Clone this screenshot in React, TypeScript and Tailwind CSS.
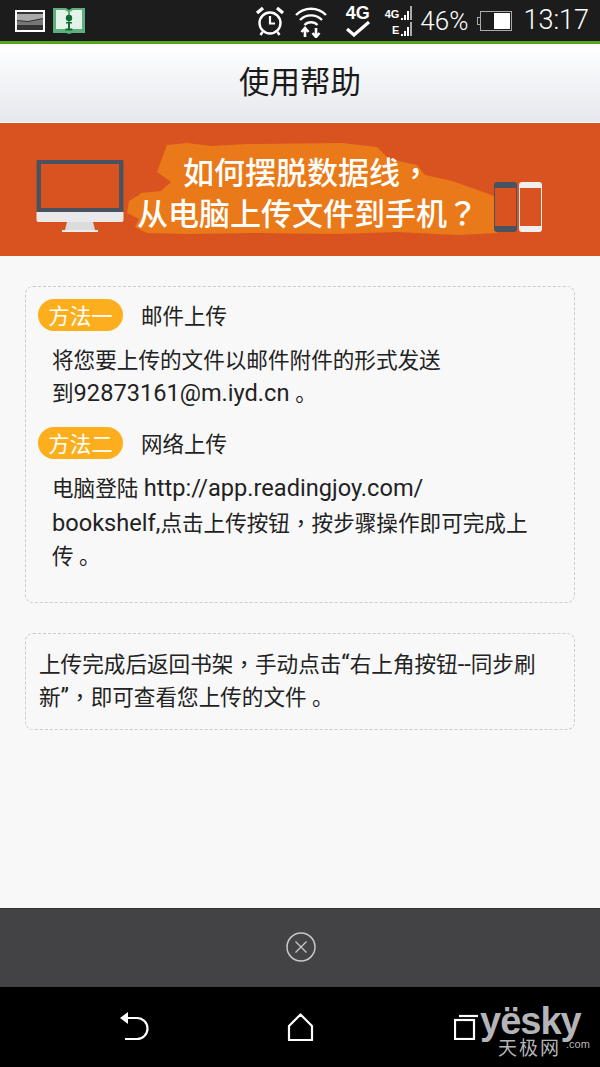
import React from 'react';

const font = { fontFamily: 'Roboto, "Noto Sans CJK SC", sans-serif' };

// latin runs are set a bit larger than the chinese ones in the reference
const L = ({ children }: { children: React.ReactNode }) => <span className="text-[23.6px] leading-[0]">{children}</span>;
// centered fullwidth punctuation
const P = ({ children }: { children: React.ReactNode }) => <span className="font-['Noto_Sans_CJK_TC']">{children}</span>;

const Signal = ({ label }: { label: string }) => (
  <div className="flex items-end h-[14px] gap-[1px]">
    <span className="text-[11px] leading-[11px] font-bold text-white font-['Liberation_Sans'] mr-[1px]">{label}</span>
    <span className="w-[2px] h-[2px] bg-white" />
    <span className="w-[2px] h-[5px] bg-white" />
    <span className="w-[2px] h-[9px] bg-white" />
    <span className="w-[2px] h-[14px] bg-[#aaaaaa]" />
  </div>
);

const StatusBar = () => (
  <div className="h-[41px] bg-[#1c1c1c] flex items-center pl-[14px] pr-[11px] text-white">
    <svg width="32" height="26" viewBox="0 0 32 26" className="mr-[6px]">
      <rect x="1" y="2" width="30" height="22" fill="#fff" />
      <rect x="3" y="4" width="26" height="18" fill="#333" />
      <path d="M3 6h26v4L14 13 3 12z" fill="#aaa" />
      <path d="M3 13l11 1 15-3v6H3z" fill="#777" />
    </svg>
    <svg width="34" height="28" viewBox="0 0 34 28">
      <path d="M1 1h13l3 2 3-2h13v25H20l-3 1-3-1H1z" fill="#5fae7d" />
      <path d="M4 3h9l3 2v18l-3-1H4zM30 3h-9l-3 2v18l3-1h9z" fill="#e3f3e8" />
      <circle cx="17" cy="11" r="3.200" fill="#0f6b35" />
      <path d="M14 15h6v1.600h-2v5h2.400v2h-7v-2H16v-5h-2z" fill="#0f6b35" />
    </svg>
    <div className="flex-1" />
    <svg width="32" height="32" viewBox="0 0 32 32" fill="none" stroke="#fff" className="mr-[8px]">
      <circle cx="16" cy="18" r="10.500" strokeWidth="2.400" />
      <path d="M16 11v7.500h5" strokeWidth="2.200" />
      <path d="M3 8l6-5M29 8l-6-5" strokeWidth="3.400" />
      <path d="M8.500 27l-2 3M23.500 27l2 3" strokeWidth="2.400" />
    </svg>
    <svg width="34" height="34" viewBox="0 0 34 34" fill="none" stroke="#fff" strokeWidth="2.400" className="mr-[18px]">
      <path d="M2 11a21 21 0 0 1 30 0" />
      <path d="M6 16a15.500 15.500 0 0 1 22 0" />
      <path d="M10.500 21a9 9 0 0 1 13 0" />
      <path d="M11 33v-7M7.500 28l3.500-4 3.500 4M22 24v7M18.500 29l3.500 4 3.500-4" strokeWidth="2.600" />
    </svg>
    <div className="flex flex-col items-center mr-[15px] w-[24px]">
      <span className="text-[18px] leading-[16px] font-bold font-['Liberation_Sans']">4G</span>
      <svg width="24" height="16" viewBox="0 0 24 16" fill="none" stroke="#fff" strokeWidth="3.200">
        <path d="M1 8l7 6L23 1" />
      </svg>
    </div>
    <div className="flex flex-col items-end gap-[2px] mr-[8px]">
      <Signal label="4G" />
      <Signal label="E" />
    </div>
    <span className="text-[26px] font-light leading-none mr-[9px]">46%</span>
    <div className="flex items-center mr-[11px]">
      <span className="w-[3px] h-[8px] border border-r-0 border-[#aaaaaa]" />
      <div className="w-[32px] h-[20px] border border-[#aaaaaa] flex justify-end items-center pr-[1px]">
        <span className="w-[16px] h-[16px] bg-white" />
      </div>
    </div>
    <span className="text-[27px] font-light leading-none">13:17</span>
  </div>
);

const Banner = () => (
  <div className="h-[133px] bg-[#d8531f] flex items-start pl-[36px]">
    <svg width="88" height="74" viewBox="0 0 88 74" className="mt-[37px] shrink-0">
      <rect x="0.500" y="0" width="87" height="52" rx="1.500" fill="#4a5260" />
      <rect x="5" y="4" width="78" height="44" fill="#d8531f" />
      <path d="M0.500 52h87v8a2 2 0 0 1-2 2h-83a2 2 0 0 1-2-2z" fill="#e9e9ea" />
      <path d="M31 62h26l2 8H29z" fill="#dcdcdc" />
      <rect x="26" y="70" width="36" height="2" fill="#ececec" />
    </svg>
    <div className="relative ml-[13px] mt-[29px] w-[341px] shrink-0 flex flex-col text-white text-[31px] leading-[38px] font-medium">
      <svg width="370" height="92" viewBox="0 0 370 92" className="absolute left-[-10px] top-[-9px]">
        <path d="M40 2l20-2 25 3 35-2 95-1 35 4 12 12 28 6 8 10 27 6 20 7 25 9v36l-40 2-60-3-60 2-80-1-70 1-40-1-12-6 4-8-12-6 2-12 10-6 2-2 20-2 10-9-14-10z" fill="#ea7a19" />
      </svg>
      <span className="relative pl-[46px] whitespace-nowrap">如何摆脱数据线<P>，</P></span>
      <span className="relative whitespace-nowrap">从电脑上传文件到手机<P>？</P></span>
    </div>
    <div className="relative flex gap-[2px] ml-[16px] mt-[59px] shrink-0">
      <div className="w-[23px] h-[50px] rounded-[3px] bg-[#4a5260] py-[6px] px-[1px]">
        <div className="w-full h-full bg-[#d8531f]" />
      </div>
      <div className="w-[23px] h-[50px] rounded-[3px] bg-[#f1efed] py-[6px] px-[1px]">
        <div className="w-full h-full bg-[#d8531f]" />
      </div>
    </div>
  </div>
);

const Method = ({ tag, title }: { tag: string; title: string }) => (
  <div className="flex items-center h-[32px]">
    <span className="w-[85px] h-[32px] pt-[3px] rounded-full bg-[#fdae1c] text-white text-[21.500px] leading-[30px] text-center">{tag}</span>
    <span className="ml-[18px] pt-[4px] text-[21.500px] leading-[30px] text-[#222222]">{title}</span>
  </div>
);

const Footer = () => (
  <>
    <div className="h-[79px] bg-[#434345] border-t border-[#333335] flex items-center justify-center pb-[2px]">
      <svg width="30" height="30" viewBox="0 0 30 30" fill="none" stroke="#c8c8c8" className="ml-[2px]">
        <circle cx="15" cy="15" r="14" strokeWidth="1.500" />
        <path d="M9.500 9.500l11 11M20.500 9.500l-11 11" strokeWidth="1.300" />
      </svg>
    </div>
    <div className="relative h-[80px] bg-black grid grid-cols-3 items-center justify-items-center px-[51px]">
      <svg width="30" height="30" viewBox="0 0 30 30" fill="none" stroke="#fff" strokeWidth="2.200">
        <path d="M3 6h15a10 10 0 0 1 0 21H6" />
        <path d="M1 6l8-6v12z" fill="#fff" stroke="none" />
      </svg>
      <svg width="27" height="28" viewBox="0 0 27 28" fill="none" stroke="#fff" strokeWidth="2.200" strokeLinejoin="round">
        <path d="M13.500 1.500L2 13v14h23V13z" />
      </svg>
      <svg width="24" height="26" viewBox="0 0 24 26" fill="none" stroke="#fff" strokeWidth="2.200">
        <rect x="1" y="6" width="19" height="19" />
        <path d="M5 2h19" />
      </svg>
      <div className="absolute left-[480px] top-[18px] w-[112px] text-[#b4b5b8]">
        <div className="w-fit text-[38px] leading-[32px] font-bold tracking-[-1px] font-['Liberation_Sans']">yësky</div>
        <div className="w-fit ml-[18px] text-[19px] leading-[20px] tracking-[2px] font-['Noto_Sans_CJK_SC']">天极网</div>
        <span className="absolute left-[86px] top-[33px] text-[11px] leading-[12px] font-['Liberation_Sans']">.com</span>
      </div>
    </div>
  </>
);

export default function App() {
  return (
    <div className="w-[600px] h-[1067px] flex flex-col bg-[#f8f8f8] overflow-hidden" style={font}>
      <StatusBar />
      <div className="h-[3px] bg-[#5aa51f]" />
      <div className="h-[78px] bg-gradient-to-b from-white to-[#e5e8ee] flex items-center justify-center text-[30.500px] text-[#1a1a1a]">
        使用帮助
      </div>
      <div className="h-[1px] bg-white" />
      <Banner />
      <div className="flex-1 px-[25px] pt-[30px] text-[21.600px] text-[#222222]">
        <div className="h-[317px] border border-dashed border-[#cccccc] rounded-[8px] pt-[12px] pl-[12px]">
          <Method tag="方法一" title="邮件上传" />
          <div className="pl-[14px] pt-[13px] leading-[33px]">
            <div>将您要上传的文件以邮件附件的形式发送</div>
            <div>到<L>92873161@m.iyd.cn </L>。</div>
          </div>
          <div className="h-[17px]" />
          <Method tag="方法二" title="网络上传" />
          <div className="pl-[14px] pt-[13px] leading-[33px]">
            <div>电脑登陆 <L>http://app.readingjoy.com/</L></div>
            <div><L>bookshelf,</L>点击上传按钮<P>，</P>按步骤操作即可完成上</div>
            <div>传 。</div>
          </div>
        </div>
        <div className="mt-[30px] h-[97px] border border-dashed border-[#cccccc] rounded-[8px] pt-[13px] pl-[13px] leading-[31px]">
          <div>上传完成后返回书架<P>，</P>手动点击<L>“</L>右上角按钮<L>--</L>同步刷</div>
          <div>新<L>”</L><P>，</P>即可查看您上传的文件 。</div>
        </div>
      </div>
      <Footer />
    </div>
  );
}
